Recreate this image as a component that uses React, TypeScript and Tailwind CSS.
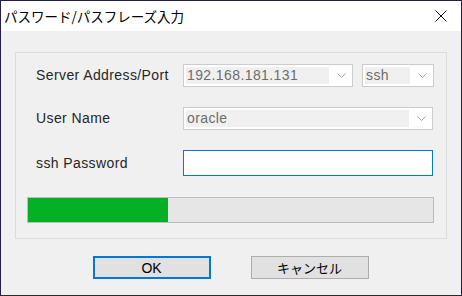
const Chevron = () => (
  <svg width="9" height="5" viewBox="0 0 9 5" className="shrink-0">
    <polyline points="0.5,0.5 4.5,4.5 8.5,0.5" fill="none" stroke="#a6a6a6" strokeWidth="1" />
  </svg>
);

const Combo = ({ value, width, fieldWidth }: { value: string; width: string; fieldWidth: string }) => (
  <div className={`${width} h-[23px] border border-[#cccccc] bg-white flex items-center pl-[2px] pr-[6px]`}>
    <div className={`${fieldWidth} h-[17px] bg-[#f0f0f0] text-[#6d6d6d] text-[14px] leading-[17px] pl-[1px]`}>{value}</div>
    <div className="flex-1 flex justify-end">
      <Chevron />
    </div>
  </div>
);

export default function App() {
  return (
    <div
      className="w-[462px] h-[296px] flex flex-col bg-[#f0f0f0] border border-[#1f1f48] border-b-[#2b2b2b] overflow-hidden"
      style={{ fontFamily: '"Liberation Sans", "Noto Sans CJK JP", sans-serif' }}
    >
      {/* title bar */}
      <div className="h-[30px] bg-white flex items-center justify-between pl-[3px] pr-[14px] shrink-0">
        <span className="text-[13.5px] text-black" style={{ fontFamily: '"Noto Sans CJK JP", sans-serif' }}>
          パスワード/パスフレーズ入力
        </span>
        <svg width="12" height="12" viewBox="0 0 12 12">
          <path d="M0.5 0.5 L11.5 11.5 M11.5 0.5 L0.5 11.5" stroke="#111" strokeWidth="1" />
        </svg>
      </div>

      <div className="flex-1 pt-[21px] px-[14px]">
        {/* group box */}
        <div className="h-[187px] border border-[#dcdcdc] pt-[11px] pl-[11px] pr-[12px]">
          <div className="grid grid-cols-[156px_1fr] items-center text-[14px] text-[#262626] tracking-[0.4px]">
            <span className="pl-[9px]">Server Address/Port</span>
            <div className="flex gap-[9px]">
              <Combo value="192.168.181.131" width="w-[170px]" fieldWidth="w-[143px]" />
              <Combo value="ssh" width="w-[72px]" fieldWidth="w-[45px]" />
            </div>
          </div>
          <div className="grid grid-cols-[156px_1fr] items-center text-[14px] text-[#262626] tracking-[0.4px] mt-[20px]">
            <span className="pl-[9px]">User Name</span>
            <Combo value="oracle" width="w-[250px]" fieldWidth="w-[223px]" />
          </div>
          <div className="grid grid-cols-[156px_1fr] items-center text-[14px] text-[#262626] tracking-[0.4px] mt-[20px]">
            <span className="pl-[9px]">ssh Password</span>
            <div className="w-[250px] h-[26px] border border-[#0078d7] bg-white" />
          </div>

          {/* progress */}
          <div className="mt-[21px] h-[26px] border border-[#bcbcbc] bg-[#e6e6e6]">
            <div className="h-full w-[140px] bg-[#06b025]" />
          </div>
        </div>

        {/* buttons */}
        <div className="flex justify-center gap-[40px] mt-[17px] pr-[1px]">
          <button className="w-[118px] h-[23px] border-2 border-[#0078d7] bg-[#e1e1e1] text-[14px] text-black leading-none">
            OK
          </button>
          <button
            className="w-[118px] h-[23px] border border-[#adadad] bg-[#e1e1e1] text-[13px] text-black leading-none"
            style={{ fontFamily: '"Noto Sans CJK JP", sans-serif' }}
          >
            キャンセル
          </button>
        </div>
      </div>
    </div>
  );
}
